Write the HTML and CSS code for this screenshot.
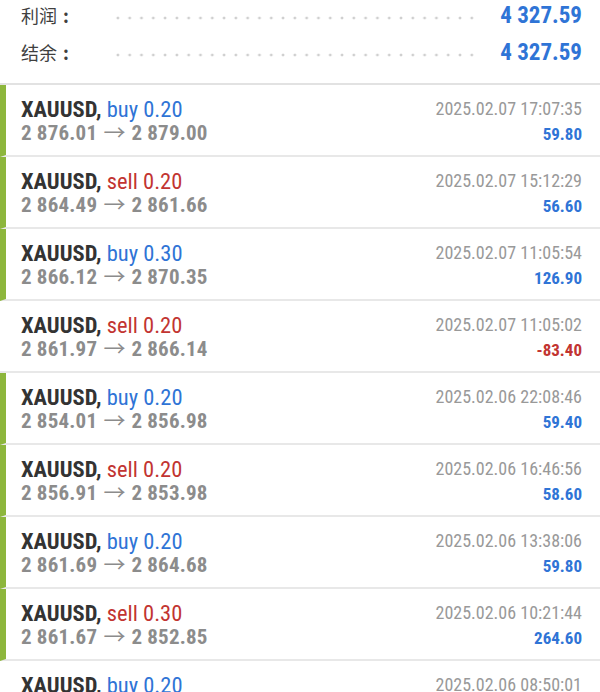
FILE: index.html
```html
<!DOCTYPE html>
<html lang="zh">
<head>
    <meta charset="UTF-8">
    <meta name="viewport" content="width=device-width, initial-scale=1.0">
    <title>History</title>
    <link rel="stylesheet" href="styles.css">
</head>
<body>
    <div class="summary">
        <div class="summary-row">
            <span class="summary-label">利润<span class="colon">:</span></span>
            <span class="leader"></span>
            <span class="summary-value">4 327.59</span>
        </div>
        <div class="summary-row">
            <span class="summary-label">结余<span class="colon">:</span></span>
            <span class="leader"></span>
            <span class="summary-value">4 327.59</span>
        </div>
    </div>

    <div class="trades">
        <div class="trade win">
            <div class="left">
                <div class="title"><b>XAUUSD,</b> <span class="buy">buy 0.20</span></div>
                <div class="prices">2 876.01<span class="arrow">&rarr;</span>2 879.00</div>
            </div>
            <div class="right">
                <div class="time">2025.02.07 17:07:35</div>
                <div class="profit">59.80</div>
            </div>
        </div>
        <div class="trade win">
            <div class="left">
                <div class="title"><b>XAUUSD,</b> <span class="sell">sell 0.20</span></div>
                <div class="prices">2 864.49<span class="arrow">&rarr;</span>2 861.66</div>
            </div>
            <div class="right">
                <div class="time">2025.02.07 15:12:29</div>
                <div class="profit">56.60</div>
            </div>
        </div>
        <div class="trade win">
            <div class="left">
                <div class="title"><b>XAUUSD,</b> <span class="buy">buy 0.30</span></div>
                <div class="prices">2 866.12<span class="arrow">&rarr;</span>2 870.35</div>
            </div>
            <div class="right">
                <div class="time">2025.02.07 11:05:54</div>
                <div class="profit">126.90</div>
            </div>
        </div>
        <div class="trade">
            <div class="left">
                <div class="title"><b>XAUUSD,</b> <span class="sell">sell 0.20</span></div>
                <div class="prices">2 861.97<span class="arrow">&rarr;</span>2 866.14</div>
            </div>
            <div class="right">
                <div class="time">2025.02.07 11:05:02</div>
                <div class="profit loss">-83.40</div>
            </div>
        </div>
        <div class="trade win">
            <div class="left">
                <div class="title"><b>XAUUSD,</b> <span class="buy">buy 0.20</span></div>
                <div class="prices">2 854.01<span class="arrow">&rarr;</span>2 856.98</div>
            </div>
            <div class="right">
                <div class="time">2025.02.06 22:08:46</div>
                <div class="profit">59.40</div>
            </div>
        </div>
        <div class="trade win">
            <div class="left">
                <div class="title"><b>XAUUSD,</b> <span class="sell">sell 0.20</span></div>
                <div class="prices">2 856.91<span class="arrow">&rarr;</span>2 853.98</div>
            </div>
            <div class="right">
                <div class="time">2025.02.06 16:46:56</div>
                <div class="profit">58.60</div>
            </div>
        </div>
        <div class="trade win">
            <div class="left">
                <div class="title"><b>XAUUSD,</b> <span class="buy">buy 0.20</span></div>
                <div class="prices">2 861.69<span class="arrow">&rarr;</span>2 864.68</div>
            </div>
            <div class="right">
                <div class="time">2025.02.06 13:38:06</div>
                <div class="profit">59.80</div>
            </div>
        </div>
        <div class="trade win">
            <div class="left">
                <div class="title"><b>XAUUSD,</b> <span class="sell">sell 0.30</span></div>
                <div class="prices">2 861.67<span class="arrow">&rarr;</span>2 852.85</div>
            </div>
            <div class="right">
                <div class="time">2025.02.06 10:21:44</div>
                <div class="profit">264.60</div>
            </div>
        </div>
        <div class="trade">
            <div class="left">
                <div class="title"><b>XAUUSD,</b> <span class="buy">buy 0.20</span></div>
                <div class="prices">2 858.37<span class="arrow">&rarr;</span>2 861.20</div>
            </div>
            <div class="right">
                <div class="time">2025.02.06 08:50:01</div>
                <div class="profit">56.60</div>
            </div>
        </div>
    </div>
</body>
</html>
```

FILE: styles.css
```css
html, body {
    margin: 0;
    height: 100%;
    overflow: hidden;
}
body {
    background: #fff;
    font-family: "Roboto Condensed", Roboto, "Noto Sans CJK SC", sans-serif;
    font-stretch: 87%;
    color: #333;
}
.summary {
    display: flex;
    flex-direction: column;
    gap: 7px;
    padding: 0 18px 16px 21px;
    border-bottom: 2px solid #e2e2e2;
}
.summary-row {
    display: flex;
    align-items: center;
    height: 30px;
}
.summary-label {
    font-family: "Noto Sans CJK SC", sans-serif;
    font-size: 18px;
    color: #3f3f3f;
    width: 91px;
}
.colon {
    margin-left: 6px;
    font-weight: bold;
}
.leader {
    flex: 1;
    height: 4px;
    margin: 6px 22px 0 0;
    background-image: radial-gradient(circle, #cfcfcf 1.2px, transparent 1.7px);
    background-size: 11.8px 4px;
    background-repeat: repeat-x;
}
.summary-value {
    font-size: 23px;
    font-weight: bold;
    color: #2f74d6;
}
.trade {
    display: flex;
    justify-content: space-between;
    box-sizing: border-box;
    height: 72px;
    padding: 12px 18px 0 21px;
    border-bottom: 2px solid #e8e8e8;
}
.trade.win {
    border-left: 6px solid #8db63c;
    padding-left: 15px;
}
.title {
    font-size: 22.5px;
    line-height: 24px;
}
.title b {
    color: #333;
}
.buy {
    color: #2f74d6;
}
.sell {
    color: #c23431;
}
.prices {
    font-size: 21px;
    line-height: 25px;
    font-weight: bold;
    letter-spacing: 0.2px;
    color: #8c8c8c;
}
.arrow {
    display: inline-block;
    margin: 0 6px 0 7px;
    font-weight: normal;
    transform: scaleX(1.05);
}
.right {
    display: flex;
    flex-direction: column;
    align-items: flex-end;
}
.time {
    font-size: 18px;
    line-height: 24px;
    color: #999;
}
.profit {
    font-size: 17px;
    line-height: 26px;
    font-weight: bold;
    color: #2f74d6;
}
.profit.loss {
    color: #c23431;
}
```
